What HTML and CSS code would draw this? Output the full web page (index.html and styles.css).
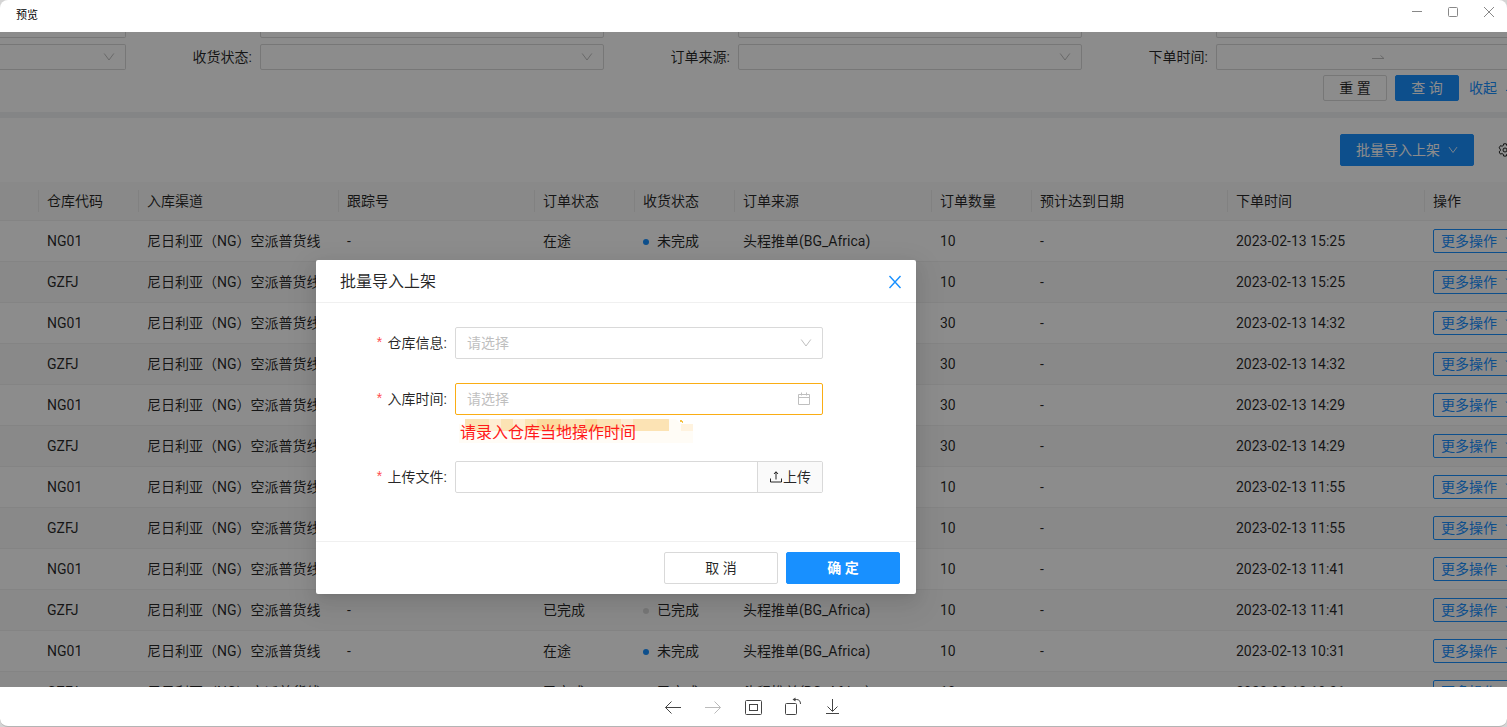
FILE: index.html
```html
<!DOCTYPE html>
<html lang="zh-CN">
<head>
  <meta charset="UTF-8">
  <meta name="viewport" content="width=device-width, initial-scale=1.0">
  <title>预览</title>
  <link rel="stylesheet" href="styles.css">
</head>
<body>

<!-- shared icons -->
<svg class="defs" width="0" height="0">
  <symbol id="down" viewBox="0 0 12 12"><path d="M1.200 2.500 6 9l4.800-6.500"/></symbol>
  <symbol id="up" viewBox="0 0 12 12"><path d="M1.200 9 6 3l4.800 6"/></symbol>
</svg>

<div class="window">
  <header class="titlebar">
    <span class="titlebar-text">预览</span>
    <div class="titlebar-buttons">
      <button type="button" aria-label="最小化"><svg width="12" height="12" viewBox="0 0 12 12"><path d="M1 5.500h10"/></svg></button>
      <button type="button" aria-label="最大化"><svg width="12" height="12" viewBox="0 0 12 12"><rect x="1.500" y="1.500" width="9" height="9" rx="1"/></svg></button>
      <button type="button" aria-label="关闭"><svg width="12" height="12" viewBox="0 0 12 12"><path d="M1 1l10 10M11 1L1 11"/></svg></button>
    </div>
  </header>

  <main class="page">
    <form class="search">
      <div class="search-grid">
        <div class="item first"><div class="field"></div></div>
        <div class="item"><div class="field"></div></div>
        <div class="item"><div class="field"></div></div>
        <div class="item last"><div class="field"></div></div>

        <div class="item first">
          <div class="field"><select aria-label="状态"><option></option></select><svg class="arrow"><use href="#down"/></svg></div>
        </div>
        <div class="item">
          <label for="receive">收货状态:</label>
          <div class="field"><select id="receive"><option></option></select><svg class="arrow"><use href="#down"/></svg></div>
        </div>
        <div class="item">
          <label for="source">订单来源:</label>
          <div class="field"><select id="source"><option></option></select><svg class="arrow"><use href="#down"/></svg></div>
        </div>
        <div class="item last">
          <label for="start">下单时间:</label>
          <div class="field">
            <input type="text" id="start" class="range-start">
            <svg class="range-arrow" width="14" height="14" viewBox="0 0 14 14"><path d="M1 8.500h12L9.500 5.500"/></svg>
            <input type="text" class="range-end" aria-label="结束时间">
          </div>
        </div>
      </div>
      <div class="search-actions">
        <button type="button" class="btn small">重 置</button>
        <button type="button" class="btn small primary">查 询</button>
        <a href="#" class="collapse">收起 <svg class="arrow"><use href="#up"/></svg></a>
      </div>
    </form>

    <section class="list">
      <div class="list-toolbar">
        <button type="button" class="btn primary batch">批量导入上架 <svg class="arrow"><use href="#down"/></svg></button>
        <svg class="gear" width="14" height="14" viewBox="0 0 14 14"><path d="M5.700.8h2.600l.4 1.700 1.200.7 1.700-.5 1.300 2.200-1.200 1.200v1.600l1.200 1.200-1.300 2.200-1.700-.5-1.200.7-.4 1.800H5.700l-.4-1.800-1.200-.7-1.700.5L1.100 8.900l1.200-1.200V6.100L1.100 4.900l1.300-2.200 1.700.5 1.200-.7z"/><circle cx="7" cy="7" r="2"/></svg>
      </div>
      <table class="orders">
        <colgroup>
          <col class="w-edge"><col class="w-s"><col class="w-l"><col class="w-t"><col class="w-s"><col class="w-s">
          <col class="w-m"><col class="w-s"><col class="w-t"><col class="w-m"><col>
        </colgroup>
        <thead>
          <tr>
            <th></th><th>仓库代码</th><th>入库渠道</th><th>跟踪号</th><th>订单状态</th><th>收货状态</th>
            <th>订单来源</th><th>订单数量</th><th>预计达到日期</th><th>下单时间</th><th>操作</th>
          </tr>
        </thead>
        <tbody id="rows"></tbody>
      </table>
    </section>

    <div class="mask">
      <div class="modal" role="dialog" aria-labelledby="modal-title">
        <div class="modal-header">
          <span id="modal-title">批量导入上架</span>
          <button type="button" class="close" aria-label="关闭"><svg width="14" height="14" viewBox="0 0 14 14"><path d="M1.500 1l11 12M12.500 1l-11 12"/></svg></button>
        </div>
        <form class="modal-body">
          <div class="form-row">
            <label for="warehouse"><i>*</i>仓库信息:</label>
            <div class="field"><select id="warehouse"><option>请选择</option></select><svg class="arrow"><use href="#down"/></svg></div>
          </div>
          <div class="form-row">
            <label for="intime"><i>*</i>入库时间:</label>
            <div class="field warning">
              <input type="text" id="intime" placeholder="请选择">
              <svg class="calendar" width="14" height="14" viewBox="0 0 14 14"><path d="M1.500 2.500h11v10h-11zM1.500 5.500h11M4.500 .5v3M9.500 .5v3"/></svg>
            </div>
            <div class="hint">
              <svg class="hint-mark" width="234" height="24" viewBox="0 0 234 24">
                <path fill="#fffcf6" d="M0 5h6v19H0zM6 12h204v12H6zM210 0h7l5 5h12v19h-24z"/>
                <path fill="#fce3b4" d="M6 0h204v12H6z"/>
                <path fill="#feeed3" d="M30 0h12v12H30zM54 0h12v12H54zM162 0h12v12h-12z"/>
                <path fill="#fbdb9c" d="M78 0h24v12H78zM126 0h12v12h-12z"/>
                <path fill="#fff3df" d="M222 5h12v7h-12z"/>
                <path fill="#f5c244" d="M221 1h2v1h1v2h-1V3h-2z"/>
              </svg>
              <span>请录入仓库当地操作时间</span>
            </div>
          </div>
          <div class="form-row">
            <label for="file"><i>*</i>上传文件:</label>
            <div class="field upload">
              <input type="text" id="file">
              <button type="button"><svg width="14" height="14" viewBox="0 0 14 14"><path d="M1.500 8.500v3.500h11V8.500M7 9.500V2M5 4l2-2.300L9 4"/></svg>上传</button>
            </div>
          </div>
        </form>
        <div class="modal-footer">
          <button type="button" class="btn">取 消</button>
          <button type="button" class="btn primary strong">确 定</button>
        </div>
      </div>
    </div>
  </main>

  <footer class="viewer-bar">
    <button type="button" aria-label="上一张"><svg width="20" height="20" viewBox="0 0 20 20"><path d="M18 10.500H2.500M8.500 4.500l-6 6 6 6"/></svg></button>
    <button type="button" aria-label="下一张" disabled><svg width="20" height="20" viewBox="0 0 20 20"><path d="M2 10.500h15.500M11.500 4.500l6 6-6 6"/></svg></button>
    <button type="button" aria-label="原始大小"><svg width="20" height="20" viewBox="0 0 20 20"><rect x="2.500" y="3.500" width="16" height="14" rx="1"/><rect x="6.500" y="7.500" width="8" height="6"/></svg></button>
    <button type="button" aria-label="旋转"><svg width="20" height="20" viewBox="0 0 20 20"><rect x="2.500" y="6.500" width="11" height="11" rx="1"/><path d="M11 2.500h2.500c2.500 0 4 1.500 4 4.500"/><path class="solid" d="M9.500 2.500 12.500.5v4z"/></svg></button>
    <button type="button" aria-label="下载"><svg width="20" height="20" viewBox="0 0 20 20"><path d="M9.500 2v12M4.500 9.500l5 5 5-5M3 16.500h13"/></svg></button>
  </footer>
</div>

<script src="script.js"></script>
</body>
</html>
```

FILE: styles.css
```css
* {
    box-sizing: border-box;
}

body {
    margin: 0;
    background: #d4d4d4;
    color: rgba(0, 0, 0, 0.85);
    font-family: Roboto, "Noto Sans CJK SC", sans-serif;
    font-size: 14px;
    line-height: 22px;
}

button,
input,
select {
    font: inherit;
    color: inherit;
}

svg {
    fill: none;
    stroke: currentColor;
    flex: none;
}

.defs {
    position: absolute;
}

.window {
    display: flex;
    flex-direction: column;
    height: 100vh;
    overflow: hidden;
    background: #fff;
    border-bottom: 1px solid #b4b4b4;
    border-radius: 8px;
}

/* title bar */
.titlebar {
    display: flex;
    justify-content: space-between;
    height: 32px;
    padding-left: 16px;
    line-height: 32px;
    font-size: 11px;
    color: #000;
}

.titlebar-buttons {
    display: flex;
}

.titlebar-buttons button {
    display: flex;
    align-items: center;
    justify-content: center;
    width: 36px;
    height: 24px;
    padding: 0;
    border: none;
    background: none;
    color: #888;
}

/* page */
.page {
    position: relative;
    flex: 1;
    min-height: 0;
    overflow: hidden;
}

.arrow {
    width: 12px;
    height: 12px;
}

.field {
    display: flex;
    align-items: center;
    flex: 1;
    min-width: 0;
    height: 26px;
    border: 1px solid #d9d9d9;
    border-radius: 2px;
    background: #fff;
}

.field select,
.field input {
    flex: 1;
    min-width: 0;
    height: 100%;
    padding: 0 11px;
    border: none;
    outline: none;
    background: none;
    appearance: none;
}

.field .arrow {
    margin-right: 10px;
    color: #bfbfbf;
}

.search {
    overflow: hidden;
    height: 86px;
    border-bottom: 6px solid #f0f2f5;
}

.search-grid {
    display: grid;
    grid-template-columns: minmax(0, 126fr) minmax(0, 478fr) minmax(0, 478fr) minmax(0, 425fr);
    gap: 6px 0;
    margin-top: -20px;
}

.item {
    display: flex;
    align-items: center;
    justify-content: flex-end;
    padding-left: 134px;
}

.item label {
    width: 134px;
    margin-left: -134px;
    padding-right: 8px;
    text-align: right;
}

.item.first {
    padding-left: 0;
}

.item.first .field {
    border-left: none;
    border-radius: 0 2px 2px 0;
}

.item.last .field {
    border-right: none;
    border-radius: 2px 0 0 2px;
}

.field .range-start {
    flex: 0 1 154px;
}

.range-arrow {
    color: #bfbfbf;
}

.search-actions {
    display: flex;
    justify-content: flex-end;
    gap: 8px;
    margin: 5px -10px 0 0;
}

.btn {
    height: 32px;
    padding: 0 15px;
    border: 1px solid #d9d9d9;
    border-radius: 2px;
    background: #fff;
    white-space: nowrap;
}

.btn.small {
    width: 64px;
    height: 26px;
    padding: 0;
    line-height: 24px;
}

.btn.primary {
    border-color: #1890ff;
    background: #1890ff;
    color: #fff;
}

.collapse {
    display: flex;
    align-items: center;
    gap: 8px;
    padding-left: 2px;
    color: #1890ff;
    text-decoration: none;
}

.list-toolbar {
    display: flex;
    align-items: center;
    justify-content: flex-end;
    gap: 24px;
    height: 64px;
    margin-right: -5px;
}

.batch {
    display: flex;
    align-items: center;
    gap: 8px;
}

.batch .arrow {
    width: 10px;
    height: 10px;
}

/* order table */
.orders {
    width: calc(100% + 30px);
    table-layout: fixed;
    border-collapse: separate;
    border-spacing: 0;
}

.w-edge {
    width: 39px;
}

.w-s {
    width: 100px;
}

.w-t {
    width: 196px;
}

.w-m {
    width: 197px;
}

.w-l {
    width: 200px;
}

.orders th,
.orders td {
    padding: 0 8px;
    border-bottom: 1px solid #f0f0f0;
    text-align: left;
    font-weight: 400;
    white-space: nowrap;
}

.orders th {
    height: 39px;
    background: linear-gradient(#ececec, #ececec) right center / 1px 22px no-repeat #fafafa;
}

.orders td {
    height: 41px;
}

.orders tr:nth-child(even) td {
    background: #fafafa;
}

.badge::before {
    content: "";
    display: inline-block;
    width: 6px;
    height: 6px;
    margin-right: 8px;
    border-radius: 50%;
    background: #d9d9d9;
    vertical-align: middle;
}

.badge.processing::before {
    background: #1890ff;
}

.more {
    display: flex;
    align-items: center;
    gap: 8px;
    height: 24px;
    padding: 0 7px;
    border: 1px solid #1890ff;
    border-radius: 2px;
    background: none;
    color: #1890ff;
}

/* modal */
.mask {
    position: absolute;
    inset: 0;
    padding: 228px 0 0 316px;
    background: rgba(0, 0, 0, 0.45);
}

.modal {
    width: 600px;
    border-radius: 2px;
    background: #fff;
    box-shadow: 0 3px 6px -4px rgba(0, 0, 0, 0.12), 0 6px 16px rgba(0, 0, 0, 0.08), 0 9px 28px 8px rgba(0, 0, 0, 0.05);
}

.modal-header {
    display: flex;
    align-items: center;
    justify-content: space-between;
    height: 43px;
    padding: 1px 14px 0 24px;
    border-bottom: 1px solid #f0f0f0;
    font-size: 16px;
}

.close {
    display: flex;
    padding: 0;
    border: none;
    background: none;
    color: #1890ff;
}

.close svg {
    stroke-width: 1.4;
}

.modal-body {
    display: flex;
    flex-direction: column;
    gap: 24px;
    padding: 24px 93px 48px 24px;
}

.form-row {
    display: grid;
    grid-template-columns: 115px 1fr;
    align-items: center;
}

.form-row label {
    padding-right: 8px;
    text-align: right;
}

.form-row i {
    margin-right: 4px;
    color: #ff4d4f;
    font-family: "Liberation Mono", monospace;
    font-style: normal;
    line-height: 1;
}

.form-row .field {
    height: 32px;
}

.form-row select,
.form-row input::placeholder {
    color: #bfbfbf;
}

.field.warning {
    border-color: #faad14;
}

.calendar {
    margin-right: 11px;
    color: #bfbfbf;
}

.hint {
    position: relative;
    grid-column: 2;
    height: 22px;
    padding: 7px 0 0 5px;
    color: #ff1a1a;
    font-size: 16px;
}

.hint span {
    position: relative;
}

.hint-mark {
    position: absolute;
    top: 4px;
    left: 4px;
    stroke: none;
}

.upload button {
    display: flex;
    align-items: center;
    height: 30px;
    padding: 0 11px;
    border: none;
    border-left: 1px solid #d9d9d9;
    background: #fafafa;
}

.modal-footer {
    display: flex;
    justify-content: flex-end;
    gap: 8px;
    padding: 10px 16px;
    border-top: 1px solid #f0f0f0;
}

.modal-footer .btn {
    width: 114px;
}

.strong {
    font-weight: 700;
}

/* viewer toolbar */
.viewer-bar {
    display: flex;
    justify-content: center;
    height: 39px;
    padding: 1px 1px 0 0;
}

.viewer-bar button {
    display: flex;
    align-items: center;
    justify-content: center;
    width: 40px;
    padding: 0;
    border: none;
    background: none;
    color: #444;
}

.viewer-bar button:disabled {
    color: #bbb;
}

.viewer-bar .solid {
    fill: currentColor;
    stroke: none;
}
```

FILE: script.js
```js
const orders = [
  ["NG01", 10, "15:25"],
  ["GZFJ", 10, "15:25"],
  ["NG01", 30, "14:32"],
  ["GZFJ", 30, "14:32"],
  ["NG01", 30, "14:29"],
  ["GZFJ", 30, "14:29"],
  ["NG01", 10, "11:55"],
  ["GZFJ", 10, "11:55"],
  ["NG01", 10, "11:41"],
  ["GZFJ", 10, "11:41"],
  ["NG01", 10, "10:31"],
  ["GZFJ", 10, "10:31"]
];

document.getElementById("rows").innerHTML = orders.map(([code, count, time]) => {
  const done = code === "GZFJ";
  return `<tr>
    <td></td>
    <td>${code}</td>
    <td>尼日利亚（NG）空派普货线</td>
    <td>-</td>
    <td>${done ? "已完成" : "在途"}</td>
    <td><span class="badge ${done ? "" : "processing"}">${done ? "已完成" : "未完成"}</span></td>
    <td>头程推单(BG_Africa)</td>
    <td>${count}</td>
    <td>-</td>
    <td>2023-02-13 ${time}</td>
    <td><button type="button" class="more">更多操作 <svg class="arrow"><use href="#down"/></svg></button></td>
  </tr>`;
}).join("");
```
